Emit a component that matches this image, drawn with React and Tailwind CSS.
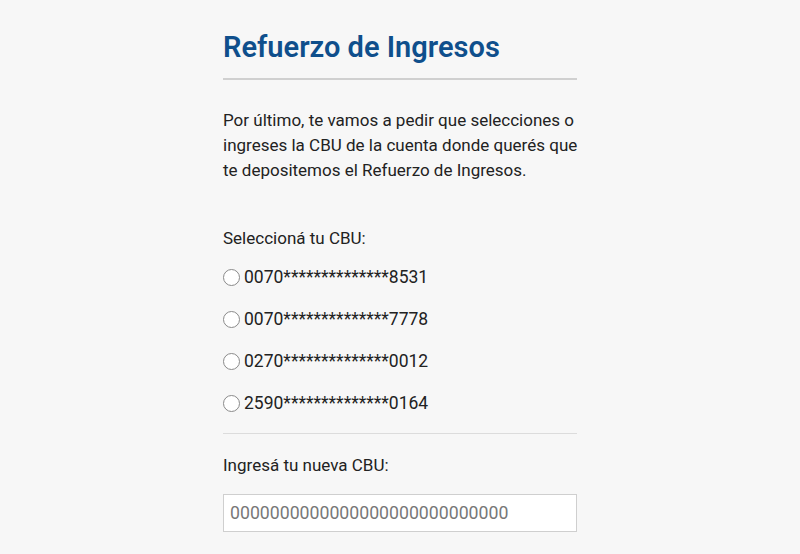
export default function App() {
  const cbus = [
    "0070**************8531",
    "0070**************7778",
    "0270**************0012",
    "2590**************0164",
  ];
  return (
    <div className="w-[800px] h-[554px] bg-[#f7f7f7] overflow-hidden" style={{ fontFamily: "Roboto, 'Noto Sans', sans-serif" }}>
      <div className="ml-[223px] w-[354px] pt-[28px]">
        <h1 className="text-[29px] leading-[38px] font-semibold text-[#0f4f8c]">Refuerzo de Ingresos</h1>
        <div className="mt-[12px] h-[2px] bg-[#d0d0d0]" />
        <p className="mt-[28px] text-[17px] leading-[25px] text-[#222] whitespace-nowrap">
          Por último, te vamos a pedir que selecciones o<br />
          ingreses la CBU de la cuenta donde querés que<br />
          te depositemos el Refuerzo de Ingresos.
        </p>
        <div className="mt-[43px] text-[17px] leading-[25px] text-[#222]">Seleccioná tu CBU:</div>
        <div className="mt-[14px] flex flex-col gap-[17px]">
          {cbus.map((c) => (
            <label key={c} className="flex items-center h-[25px] text-[17.5px] text-[#222]">
              <span className="w-[17px] h-[17px] rounded-full border border-[#8a8a8a] bg-white mr-[4px] shrink-0" />
              <span>{c}</span>
            </label>
          ))}
        </div>
        <div className="mt-[17px] h-px bg-[#dcdcdc]" />
        <div className="mt-[19px] text-[17px] leading-[25px] text-[#222]">Ingresá tu nueva CBU:</div>
        <div className="mt-[16px] h-[38px] border border-[#cfcfcf] bg-white flex items-center px-[6px] text-[17.7px] text-[#777]">
          0000000000000000000000000000
        </div>
      </div>
    </div>
  );
}
